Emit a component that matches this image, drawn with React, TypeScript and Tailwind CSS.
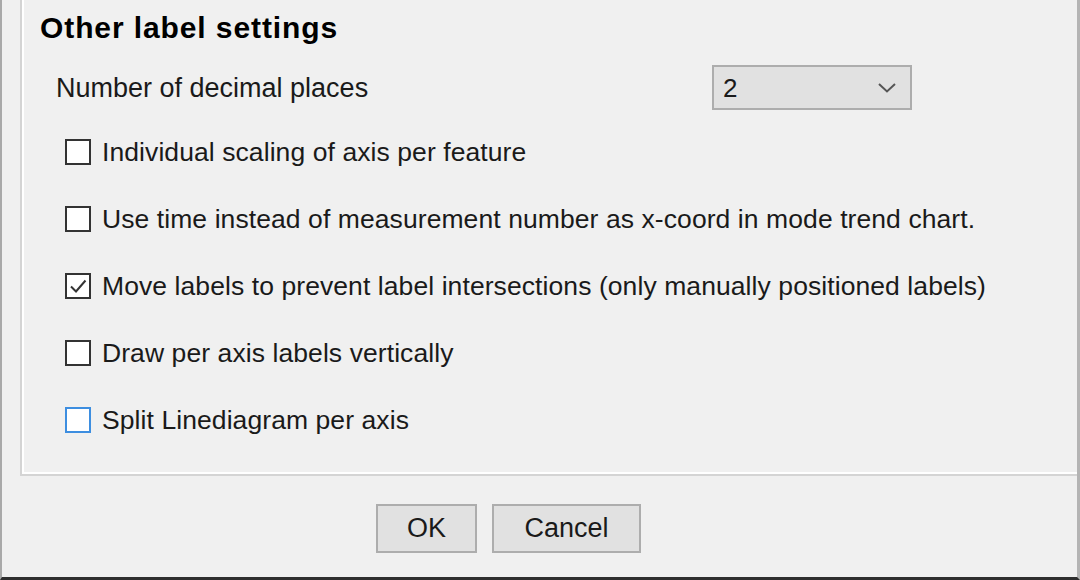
import React, { useState } from 'react';

const rows = [
  { label: 'Individual scaling of axis per feature', checked: false },
  { label: 'Use time instead of measurement number as x-coord in mode trend chart.', checked: false },
  { label: 'Move labels to prevent label intersections (only manually positioned labels)', checked: true },
  { label: 'Draw per axis labels vertically', checked: false },
  { label: 'Split Linediagram per axis', checked: false, focused: true },
];

const CheckBox = ({ checked, focused }: { checked: boolean; focused?: boolean }) => (
  <span
    className={
      focused
        ? 'w-[26px] h-[26px] shrink-0 border-2 border-[#3d8ee0] bg-white flex items-center justify-center'
        : 'w-[26px] h-[26px] shrink-0 border-2 border-[#333333] bg-white flex items-center justify-center'
    }
  >
    {checked && (
      <svg width="20" height="20" viewBox="0 0 20 20">
        <path d="M3 10.5 L8 15.5 L17.5 4.5" fill="none" stroke="#333" strokeWidth="2" />
      </svg>
    )}
  </span>
);

const App = () => {
  const [values, setValues] = useState(rows.map((r) => r.checked));

  return (
    <div
      className="w-[1080px] h-[580px] bg-[#f0f0f0] border-l-2 border-l-[#a9a9a9] border-r-[3px] border-r-[#b4b4b4] border-b-[3px] border-b-[#2e2e2e] flex flex-col text-[#1a1a1a] overflow-hidden"
      style={{ fontFamily: '"Liberation Sans", Arial, sans-serif' }}
    >
      <div className="ml-[18px] h-[476px] shrink-0 border-l-2 border-l-[#d4d4d4] border-b-2 border-b-[#d4d4d4] shadow-[inset_2px_-2px_0_#ffffff] pl-[18px] pt-[11px]">
        <h2 className="text-[30px] font-bold leading-[34px] tracking-[0.9px] text-black">Other label settings</h2>

        <div className="flex items-center mt-[20px] pl-[16px]">
          <span className="text-[27px] leading-[32px] w-[656px]">Number of decimal places</span>
          <div className="w-[200px] h-[45px] bg-[#e1e1e1] border-2 border-[#adadad] flex items-center justify-between pl-[9px] pr-[14px]">
            <span className="text-[26px] leading-none">2</span>
            <svg width="18" height="10" viewBox="0 0 18 10">
              <path d="M1 1 L9 8.5 L17 1" fill="none" stroke="#555" strokeWidth="2" />
            </svg>
          </div>
        </div>

        <div className="flex flex-col gap-[35px] mt-[26px] pl-[25px]">
          {rows.map((r, i) => (
            <label
              key={r.label}
              className="flex items-center gap-[11px] h-[32px] cursor-default"
              onClick={() => setValues(values.map((v, j) => (j === i ? !v : v)))}
            >
              <CheckBox checked={values[i]} focused={r.focused} />
              <span className="text-[26.5px] leading-[32px] tracking-[0.08px] whitespace-nowrap">{r.label}</span>
            </label>
          ))}
        </div>
      </div>

      <div className="flex gap-[15px] pl-[374px] pt-[28px]">
        <button className="w-[101px] h-[49px] bg-[#e1e1e1] border-2 border-[#adadad] text-[27px] leading-none">OK</button>
        <button className="w-[149px] h-[49px] bg-[#e1e1e1] border-2 border-[#adadad] text-[27px] leading-none">Cancel</button>
      </div>
    </div>
  );
};

export default App;
